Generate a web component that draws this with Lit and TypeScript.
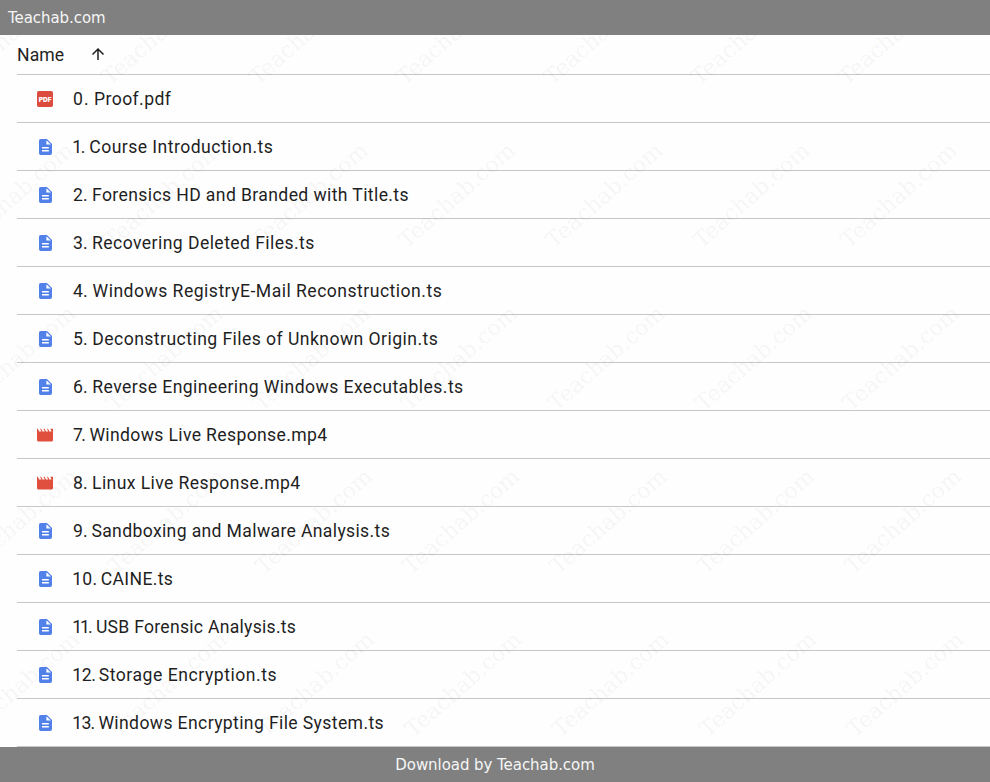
import { LitElement, html, svg, css } from "lit";
import { customElement } from "lit/decorators.js";
import { styleMap } from "lit/directives/style-map.js";

type Kind = "pdf" | "doc" | "video";

// indent and width are the pixel extents of the title, tracking spaces out the number.
interface Entry {
  kind: Kind;
  num: string;
  title: string;
  indent: number;
  width: number;
  tracking: number;
}

const entry = (kind: Kind, num: string, title: string, indent: number, end: number, tracking = 0): Entry => ({
  kind, num, title, indent, width: end - indent, tracking,
});

const entries: Entry[] = [
  entry("pdf", "0.", "Proof.pdf", 21, 98.3, 1.2),
  entry("doc", "1.", "Course Introduction.ts", 16.3, 200.3, -1.3),
  entry("doc", "2.", "Forensics HD and Branded with Title.ts", 19, 336.3),
  entry("doc", "3.", "Recovering Deleted Files.ts", 19, 241.8),
  entry("doc", "4.", "Windows RegistryE-Mail Reconstruction.ts", 19.6, 369.2),
  entry("doc", "5.", "Deconstructing Files of Unknown Origin.ts", 19.3, 365.2),
  entry("doc", "6.", "Reverse Engineering Windows Executables.ts", 19.3, 390.6),
  entry("video", "7.", "Windows Live Response.mp4", 16.4, 254.5, -1.6),
  entry("video", "8.", "Linux Live Response.mp4", 19, 227.6),
  entry("doc", "9.", "Sandboxing and Malware Analysis.ts", 18.4, 317.1),
  entry("doc", "10.", "CAINE.ts", 27.7, 100.3, 0.2),
  entry("doc", "11.", "USB Forensic Analysis.ts", 22.9, 223.2, -2),
  entry("doc", "12.", "Storage Encryption.ts", 25.7, 204.2, -0.4),
  entry("doc", "13.", "Windows Encrypting File System.ts", 25.4, 311, -0.7),
];

const ctx = document.createElement("canvas").getContext("2d")!;
const fit = (text: string, width: number): string => {
  ctx.font = "17.6px Roboto";
  return `${((width - ctx.measureText(text).width) / text.length).toFixed(3)}px`;
};

const icons = {
  pdf: svg`<rect x="1" y="1" width="16" height="16" rx="1.8" fill="#db4c3f"/>
    <text class="pdf" x="2.7" y="11.6" textLength="12.8" lengthAdjust="spacingAndGlyphs">PDF</text>`,
  doc: svg`<path d="M4.5 1H11L16 6V15.3A1.7 1.7 0 0 1 14.3 17H4.7A1.7 1.7 0 0 1 3 15.3V2.7A1.7 1.7 0 0 1 4.5 1Z" fill="#5282e9"/>
    <path d="M10.4 2.2V6.6H14.8Z" fill="#fff"/>
    <path d="M6 9.7H12.8M6 12.8H12.8" stroke="#fff" stroke-width="1.4"/>`,
  video: svg`<path d="M1 2.8H1.8L3.2 5.5H5.4L4.1 2.8H5.2L6.6 5.5H8.8L7.5 2.8H8.6L10 5.5H12.2L10.9 2.8H12L13.4 5.5H15.6L14.3 2.8H17V13.9A1.6 1.6 0 0 1 15.4 15.5H2.6A1.6 1.6 0 0 1 1 13.9Z" fill="#e04e3e"/>`,
};

@customElement("app-root")
export class AppRoot extends LitElement {
  static styles = css`
    :host { display: block; font-family: Roboto, sans-serif; color: #1f1f1f; }
    .page { position: relative; display: flex; flex-direction: column; height: 782px; background: #fefefe; overflow: hidden; }
    .bar { display: flex; align-items: center; height: 35px; flex: none; z-index: 1; box-sizing: border-box; padding: 0 8px; background: #808080; color: #f6f6f6; font: 15px "DejaVu Sans", sans-serif; letter-spacing: -0.06px; }
    .foot { justify-content: center; }
    .list { flex: 1; padding-left: 17px; }
    .head, .row { display: flex; align-items: center; box-sizing: border-box; border-bottom: 1px solid #c7c7c7; font-size: 17.6px; white-space: pre; }
    .head { height: 40px; gap: 27px; letter-spacing: 0.1px; }
    .row { height: 48px; padding-left: 19px; }
    .icon { width: 18px; height: 18px; flex: none; margin-right: 19px; }
    .pdf { font: 900 6.8px Inter, sans-serif; fill: #fff; letter-spacing: 0; }
    .num { flex: none; }
    .one { text-indent: -0.8px; }
    .arrow { width: 14px; height: 14px; margin-bottom: 1px; }
    .marks { position: absolute; inset: 0; width: 990px; height: 782px; font: 22px "DejaVu Serif", serif; fill: #000; fill-opacity: 0.055; pointer-events: none; }
  `;

  private row(e: Entry) {
    return html`<div class="row">
      <svg class="icon" viewBox="0 0 18 18">${icons[e.kind]}</svg><span
        class="num ${e.num.startsWith("1") ? "one" : ""}"
        style=${styleMap({ width: `${e.indent}px`, letterSpacing: `${e.tracking}px` })}
      >${e.num}</span><span style=${styleMap({ letterSpacing: fit(e.title, e.width) })}>${e.title}</span>
    </div>`;
  }

  render() {
    const marks = [];
    for (let r = 0; r < 5; r++)
      for (let k = -4; k < 3; k++)
        marks.push(svg`<text transform="translate(${552 + 147.3 * k + 2.1 * r} ${86 + 163 * r}) rotate(-41.3)">Teachab.com</text>`);
    return html`<div class="page">
      <header class="bar">Teachab.com</header>
      <main class="list">
        <div class="head"><span>Name</span><svg class="arrow" viewBox="0 0 14 14"><path d="M7 13V2M1.5 7.5L7 2L12.5 7.5" fill="none" stroke="#1f1f1f" stroke-width="1.5"/></svg></div>
        ${entries.map((e) => this.row(e))}
      </main>
      <svg class="marks">${marks}</svg>
      <footer class="bar foot">Download by Teachab.com</footer>
    </div>`;
  }
}
